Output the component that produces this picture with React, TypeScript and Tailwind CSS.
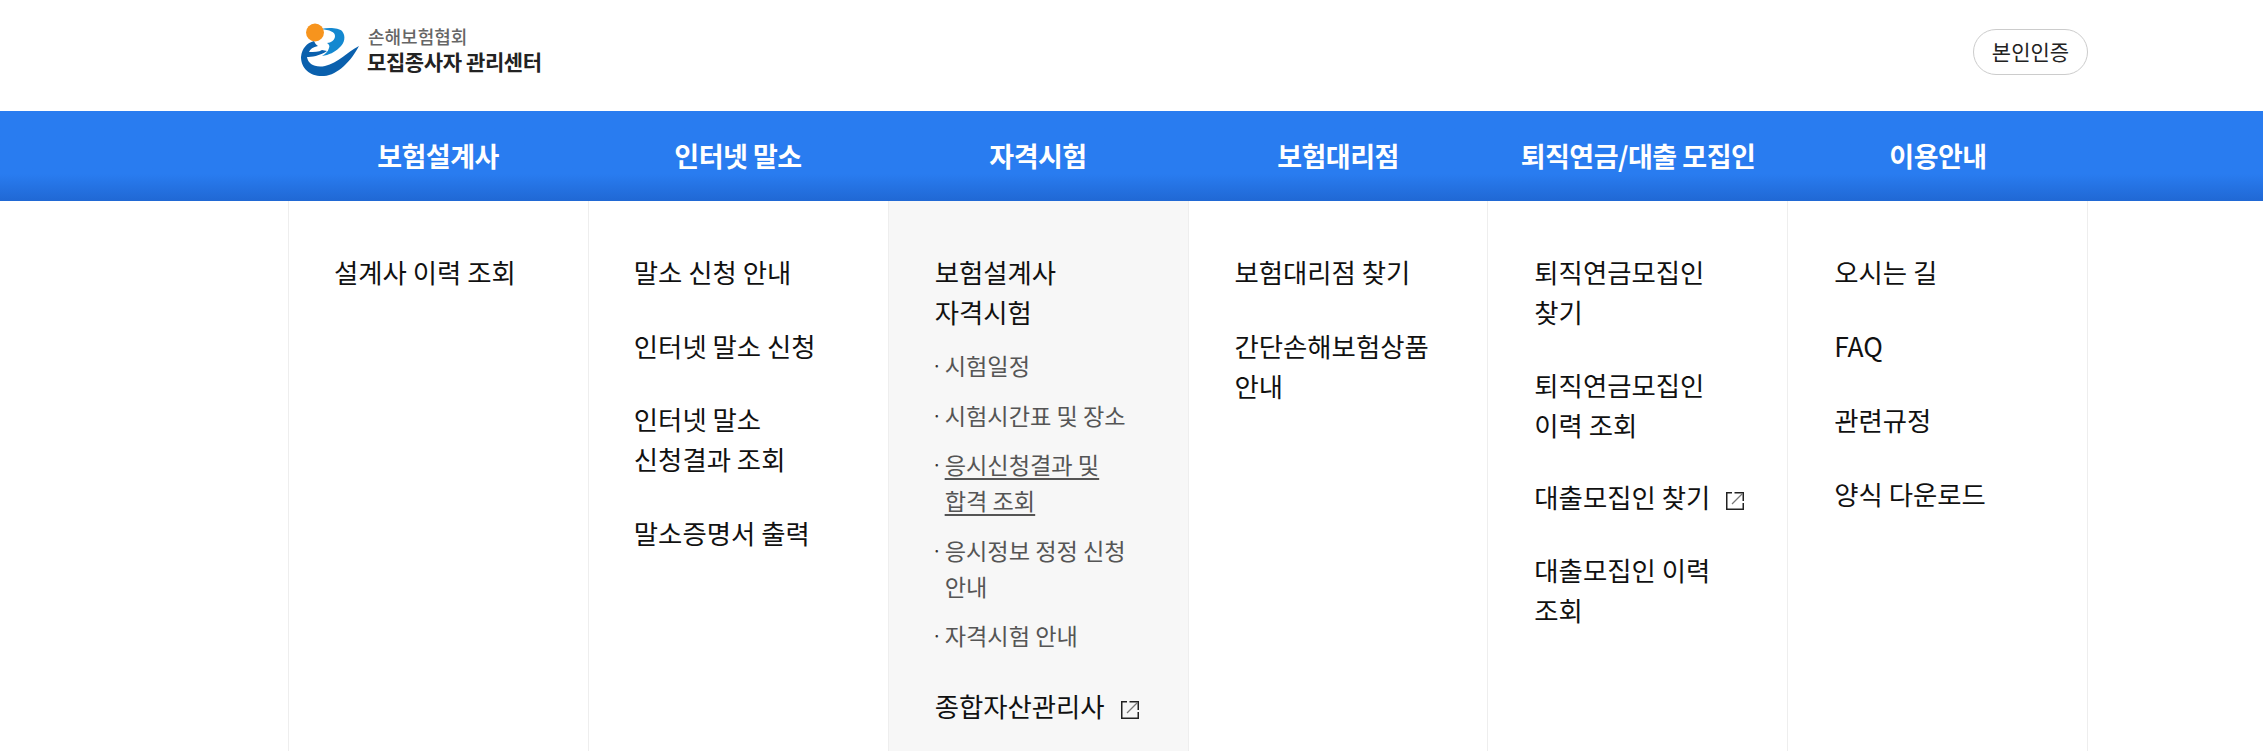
import React from 'react';

const ExternalIcon = () => (
  <svg width="18" height="18" viewBox="0 0 18 18" fill="none" className="inline-block ml-[16px] align-[-2px]">
    <path d="M6 .75H.75v16.5h16.5V11" stroke="#222" strokeWidth="1.5" />
    <path d="M8.5 .75h8.75V9" stroke="#222" strokeWidth="1.5" />
    <path d="M16.5 1.5L6 12" stroke="#777" strokeWidth="1.2" />
  </svg>
);

const nav = ['보험설계사', '인터넷 말소', '자격시험', '보험대리점', '퇴직연금/대출 모집인', '이용안내'];

const Logo = () => (
  <div className="flex items-start">
    <svg width="60" height="54" viewBox="0 0 60 54" className="mt-[23px] ml-[2px] shrink-0">
      <path d="M0 34c1-9 6-14 13-16 1 2 2 4 4 5-5 1-8 3-9 6 5 0 10 0 13-2l5 1C19 33 10 34 6 34c1 7 8 11 18 9 13-3 22-14 34-20-8 15-21 29-35 30C10 54 0 46 0 34z" fill="#0a60ad" />
      <path d="M20 6c8-2 18-1 21 2 4 5 3 12-3 17-4 4-10 7-17 8 3-2 6-4 7-8 1-2 0-4-2-5 4 0 8-3 8-7 0-4-5-6-14-7z" fill="#1488d0" />
      <circle cx="14" cy="9.5" r="9" fill="#f7941d" />
    </svg>
    <div className="flex flex-col ml-[6px] mt-[24px]">
      <span className="text-[18px] leading-[24px] font-medium text-[#666] ml-[1px]">손해보험협회</span>
      <span className="text-[21px] leading-[26px] font-bold text-[#222] tracking-[-0.4px] whitespace-nowrap">모집종사자 관리센터</span>
    </div>
  </div>
);

const Link = ({ children, className = 'mb-[33.5px]' }: { children: React.ReactNode; className?: string }) => (
  <li className={`text-[26.4px] leading-[40px] text-[#111] ${className}`}>{children}</li>
);

const Sub = ({ children, underline }: { children: string; underline?: boolean }) => (
  <li className="flex text-[23.2px] leading-[36px] text-[#555] mb-[13.6px]">
    <span className="-ml-[3px] w-[13px] shrink-0 text-[18px] text-[#333]">·</span>
    <span className={underline ? 'underline underline-offset-4' : ''}>{children}</span>
  </li>
);

export default function App() {
  return (
    <div className="w-[2263px] h-[751px] overflow-hidden bg-white break-keep font-['Noto_Sans_CJK_KR','Noto_Sans',sans-serif]">
      <header className="h-[111px] pl-[299px] pr-[175px] flex items-start justify-between">
        <Logo />
        <button className="mt-[29px] w-[115px] h-[46px] rounded-full border border-[#ccc] text-[21px] text-[#222]">본인인증</button>
      </header>
      <nav className="h-[90px] bg-gradient-to-b from-[#297cf0] via-[#297cf0] via-70% to-[#2068d4]">
        <ul className="w-[1800px] ml-[288px] grid grid-cols-6">
          {nav.map((n) => (
            <li key={n} className="h-[90px] flex items-center justify-center text-white text-[27px] font-bold tracking-[-0.5px]">{n}</li>
          ))}
        </ul>
      </nav>
      <div className="w-[1800px] ml-[288px] grid grid-cols-6 h-[550px] border-l border-[#eee]">
        <ul className="border-r border-[#eee] pl-[45px] pt-[51px]">
          <Link>설계사 이력 조회</Link>
        </ul>
        <ul className="border-r border-[#eee] pl-[45px] pt-[51px]">
          <Link>말소 신청 안내</Link>
          <Link>인터넷 말소 신청</Link>
          <Link>인터넷 말소<br />신청결과 조회</Link>
          <Link>말소증명서 출력</Link>
        </ul>
        <ul className="bg-[#f7f7f7] border-r border-[#eee] pl-[46px] pt-[51px] pr-[50px]">
          <li className="text-[26.4px] leading-[40px] text-[#111] mb-[15px]">보험설계사<br />자격시험</li>
          <Sub>시험일정</Sub>
          <Sub>시험시간표 및 장소</Sub>
          <Sub underline>응시신청결과 및 합격 조회</Sub>
          <Sub>응시정보 정정 신청 안내</Sub>
          <Sub>자격시험 안내</Sub>
          <li className="text-[26.4px] leading-[40px] text-[#111] mt-[33px] whitespace-nowrap">종합자산관리사<ExternalIcon /></li>
        </ul>
        <ul className="border-r border-[#eee] pl-[46px] pt-[51px] pr-[40px]">
          <Link>보험대리점 찾기</Link>
          <Link>간단손해보험상품 안내</Link>
        </ul>
        <ul className="border-r border-[#eee] pl-[46px] pt-[51px] pr-[40px]">
          <Link className="mb-[32.5px]">퇴직연금모집인 찾기</Link>
          <Link className="mb-[32.5px]">퇴직연금모집인 이력 조회</Link>
          <Link className="mb-[32.5px]"><span className="whitespace-nowrap">대출모집인 찾기<ExternalIcon /></span></Link>
          <Link className="mb-[32.5px]">대출모집인 이력 조회</Link>
        </ul>
        <ul className="border-r border-[#eee] pl-[46px] pt-[51px]">
          <Link className="mb-[34px]">오시는 길</Link>
          <Link className="mb-[34px]">FAQ</Link>
          <Link className="mb-[34px]">관련규정</Link>
          <Link className="mb-[34px]">양식 다운로드</Link>
        </ul>
      </div>
    </div>
  );
}
